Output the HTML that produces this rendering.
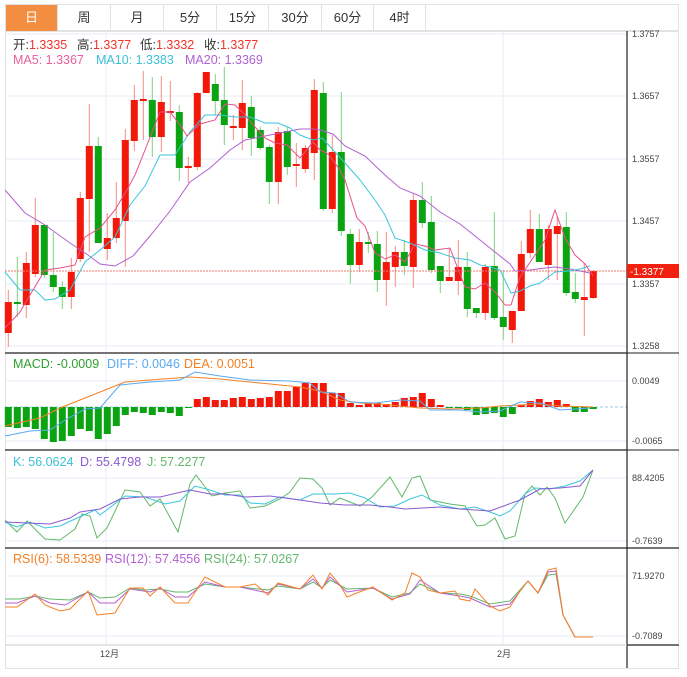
<!DOCTYPE html>
<html><head><meta charset="utf-8">
<style>
body{margin:0;background:#fff;width:687px;height:677px;overflow:hidden;font-family:"Liberation Sans","Noto Sans CJK SC",sans-serif;}
.tabs{position:absolute;left:5px;top:4px;height:27px;width:674px;border:1px solid #e2e2e2;border-bottom:1px solid #dde3ea;box-sizing:border-box;}
.tab{position:absolute;top:0;height:26px;line-height:26px;text-align:center;font-size:13px;color:#333;border-right:1px solid #e2e2e2;box-sizing:border-box;}
.tab.on{background:#f38d40;color:#fff;}
svg{position:absolute;left:0;top:0;}
</style></head><body>
<div class="tabs">
<div class="tab on" style="left:0;width:52px">日</div>
<div class="tab" style="left:52px;width:53px">周</div>
<div class="tab" style="left:105px;width:53px">月</div>
<div class="tab" style="left:158px;width:53px">5分</div>
<div class="tab" style="left:211px;width:52px">15分</div>
<div class="tab" style="left:263px;width:53px">30分</div>
<div class="tab" style="left:316px;width:52px">60分</div>
<div class="tab" style="left:368px;width:52px">4时</div>
</div>
<svg id="s" width="687" height="677" style="top:0" font-family="Liberation Sans, Noto Sans CJK SC, sans-serif">
<rect x="5.5" y="31.5" width="673" height="637" fill="none" stroke="#e2e2e2"/>
<g stroke="#e6eef4" stroke-width="1">
<line x1="5" y1="34" x2="627" y2="34"/><line x1="5" y1="96" x2="627" y2="96"/><line x1="5" y1="159" x2="627" y2="159"/><line x1="5" y1="221" x2="627" y2="221"/><line x1="5" y1="284" x2="627" y2="284"/><line x1="5" y1="346" x2="627" y2="346"/>
<line x1="5" y1="381" x2="627" y2="381"/><line x1="5" y1="441" x2="627" y2="441"/>
<line x1="5" y1="478" x2="627" y2="478"/><line x1="5" y1="541" x2="627" y2="541"/>
<line x1="5" y1="576" x2="627" y2="576"/><line x1="5" y1="636" x2="627" y2="636"/>
<line x1="106" y1="31" x2="106" y2="645"/><line x1="503" y1="31" x2="503" y2="645"/>
</g>
<line x1="5" y1="407" x2="627" y2="407" stroke="#9cc8e8" stroke-dasharray="3,2"/>
<g id="cd"></g>
<line x1="5" y1="271" x2="627" y2="271" stroke="#f07a70" stroke-dasharray="2,1"/>
<g fill="none" stroke-width="1">
<polyline stroke="#b25fd0" points="5,190 25,213 45,225 70,243 88,255 100,264 115,266 133,256 150,236 170,211 190,182 210,168 230,150 245,140 265,136 290,131 300,129 313,129 320,130 333,134 345,146 365,156 385,175 400,188 420,196 440,212 460,224 480,240 495,252 510,264 515,271 530,270 545,268 555,267 570,269 590,273"/>
<polyline stroke="#3ac6dc" points="5,272 20,290 35,290 45,300 55,299 70,290 85,262 100,250 115,237 130,205 145,186 160,155 175,155 190,132 205,115 220,115 235,117 250,117 265,123 278,123 290,128 300,135 313,140 322,138 335,152 345,163 360,180 375,200 385,215 395,238 410,243 425,250 440,253 455,258 470,260 480,265 490,267 500,270 511,293 520,291 530,286 540,283 555,272 570,271 580,269 590,266"/>
<polyline stroke="#e8508a" points="5,328 20,312 30,295 45,270 60,268 75,265 85,237 100,228 115,210 128,188 135,175 145,150 160,112 170,112 180,125 187,136 200,124 215,120 225,104 235,105 245,115 255,127 265,138 275,143 287,145 300,158 313,142 320,150 328,154 340,170 345,180 357,218 365,226 375,253 385,259 395,255 405,262 415,244 425,246 435,250 450,248 465,287 475,289 485,283 495,292 505,305 511,305 520,277 535,255 545,240 555,210 565,238 575,255 585,264 593,276"/>
<polyline stroke="#f58025" points="5,426 40,418 60,408 100,392 125,382 150,380 190,377 220,379 260,383 300,387 320,391 340,400 360,403 380,404 420,408 450,409 480,408 500,406 520,405 540,404 560,406 593,407"/>
<polyline stroke="#5aaaf0" points="5,436 30,431 50,430 65,420 85,409 100,408 120,385 150,382 180,380 195,372 220,376 250,380 290,381 310,383 320,392 335,393 350,402 375,403 400,400 420,401 430,410 460,410 480,412 500,411 520,402 540,403 560,410 590,408"/>
<polyline stroke="#62b86a" points="5,520 17,532 27,521 45,539 60,540 75,529 82,514 90,516 97,538 107,528 125,490 140,492 150,506 160,499 178,532 190,484 196,475 212,496 225,493 240,491 250,508 265,506 280,499 290,492 300,478 313,479 322,488 330,505 340,498 345,500 360,506 372,497 390,477 402,497 412,478 420,476 430,500 450,504 465,506 477,526 485,525 495,518 505,539 515,536 525,494 532,486 540,495 547,487 555,498 565,523 583,497 593,470"/>
<polyline stroke="#3ac6dc" points="5,522 17,527 30,522 45,528 60,526 75,519 95,510 100,515 125,496 145,497 165,504 180,501 195,486 210,490 225,495 240,495 250,503 265,504 280,497 300,500 313,494 335,494 350,493 365,498 380,507 395,506 410,499 422,495 440,505 460,509 475,507 490,512 500,516 510,511 525,494 535,488 550,489 565,486 580,481 593,470"/>
<polyline stroke="#8a5ad0" points="5,522 50,524 70,518 80,512 100,509 120,499 140,497 160,497 190,490 210,494 225,494 245,497 270,496 300,500 320,503 345,505 370,505 390,507 405,509 440,507 460,509 490,511 520,500 540,489 560,488 580,486 593,470"/>
<polyline stroke="#62b86a" points="5,599 20,599 35,596 50,599 70,600 88,592 100,598 115,597 130,588 145,590 160,589 175,592 188,592 205,584 225,587 240,587 268,590 278,586 300,589 313,582 322,588 330,580 347,589 373,588 392,597 410,593 420,584 440,593 460,594 470,596 490,604 510,601 528,581 538,593 548,575 556,574 563,615 575,637 593,637"/>
<polyline stroke="#b55fd0" points="5,603 17,603 35,596 50,603 65,605 88,592 100,603 115,603 130,589 150,592 160,588 175,597 188,597 205,582 225,587 240,587 268,593 278,584 300,589 313,579 322,588 330,577 347,592 373,588 392,599 410,594 420,580 440,593 460,596 470,598 490,607 510,604 528,581 538,593 548,572 556,571 563,615 575,637 593,637"/>
<polyline stroke="#f58025" points="5,607 17,607 35,594 45,605 60,611 70,609 88,591 97,615 115,613 130,588 143,588 150,596 160,587 175,603 188,603 205,577 225,587 240,587 255,584 268,595 278,583 300,589 313,575 322,589 330,573 340,585 347,597 367,589 373,587 392,600 405,593 412,573 420,577 428,590 440,593 455,591 460,599 470,601 475,589 490,606 500,611 510,607 520,591 528,581 538,593 548,570 556,568 563,615 575,637 593,637"/>
</g>
<g stroke="#222" stroke-width="1.2">
<line x1="5" y1="353" x2="627" y2="353"/><line x1="5" y1="450" x2="627" y2="450"/><line x1="5" y1="548" x2="679" y2="548"/><line x1="627" y1="645" x2="679" y2="645"/>
<line x1="627" y1="31" x2="627" y2="668"/>
</g>
<line x1="5" y1="645" x2="627" y2="645" stroke="#ccc"/>
<line x1="627" y1="353" x2="679" y2="353" stroke="#222"/><line x1="627" y1="450" x2="679" y2="450" stroke="#222"/>
<g font-size="9" fill="#444">
<text x="632" y="37">1.3757</text><text x="632" y="99">1.3657</text><text x="632" y="162">1.3557</text><text x="632" y="224">1.3457</text><text x="632" y="287">1.3357</text><text x="632" y="349">1.3258</text>
<text x="632" y="384">0.0049</text><text x="632" y="444">-0.0065</text>
<text x="632" y="481">88.4205</text><text x="632" y="544">-0.7639</text>
<text x="632" y="579">71.9270</text><text x="632" y="639">-0.7089</text>
<text x="100" y="657">12月</text><text x="497" y="657">2月</text>
</g>
<rect x="627" y="264" width="52" height="14" fill="#f2210f"/>
<text x="630" y="275" font-size="10" fill="#fff">-1.3377</text>
<g font-size="12.5">
<text y="49"><tspan x="13" fill="#333">开:</tspan><tspan fill="#f2332a">1.3335</tspan><tspan x="77" fill="#333">高:</tspan><tspan fill="#f2332a">1.3377</tspan><tspan x="140" fill="#333">低:</tspan><tspan fill="#f2332a">1.3332</tspan><tspan x="204" fill="#333">收:</tspan><tspan fill="#f2332a">1.3377</tspan></text>
<text y="64"><tspan x="13" fill="#e8609a">MA5: 1.3367</tspan><tspan x="96" fill="#3ac0d8">MA10: 1.3383</tspan><tspan x="185" fill="#b05fd0">MA20: 1.3369</tspan></text>
<text y="368"><tspan x="13" fill="#2ca02c">MACD: -0.0009</tspan><tspan x="107" fill="#5aaaf0">DIFF: 0.0046</tspan><tspan x="184" fill="#f58025">DEA: 0.0051</tspan></text>
<text y="466"><tspan x="13" fill="#3ac0d8">K: 56.0624</tspan><tspan x="80" fill="#8a5ad0">D: 55.4798</tspan><tspan x="147" fill="#62b86a">J: 57.2277</tspan></text>
<text y="563"><tspan x="13" fill="#f58025">RSI(6): 58.5339</tspan><tspan x="105" fill="#b55fd0">RSI(12): 57.4556</tspan><tspan x="204" fill="#62b86a">RSI(24): 57.0267</tspan></text>
</g>
</svg>
<script>
var C=[['r',302,333,290,347],['g',302,304,257,317],['r',263,305,252,318],['r',225,274,198,277],['g',225,275,225,278],['g',275,287,232,292],['g',287,297,281,309],['r',272,297,258,309],['r',198,259,192,262],['r',146,199,104,252],['g',146,243,137,243],['r',238,249,213,260],['r',218,238,182,243],['r',140,221,129,267],['r',100,141,85,151],['r',99,101,71,140],['g',100,137,77,157],['r',102,137,76,152],['r',111,113,81,121],['g',112,168,105,181],['r',166,168,157,183],['r',93,167,92,170],['r',72,93,72,93],['g',84,101,74,115],['g',100,125,67,145],['r',126,128,115,140],['r',103,128,80,150],['g',107,138,96,156],['g',130,148,127,150],['g',147,182,145,204],['r',132,182,127,204],['g',131,167,127,175],['r',164,166,143,187],['r',148,169,145,173],['r',90,153,79,180],['g',93,209,82,211],['r',152,209,135,213],['g',152,231,92,236],['g',234,265,229,284],['r',242,265,229,272],['g',242,244,232,253],['g',244,280,231,292],['r',262,280,232,306],['r',252,267,246,287],['g',252,266,240,275],['r',200,267,194,288],['g',200,223,182,228],['g',222,270,196,273],['g',266,281,266,293],['r',277,281,248,281],['r',267,281,240,295],['g',267,309,252,317],['g',308,313,308,318],['r',267,313,264,320],['g',266,318,212,320],['g',317,327,270,340],['r',311,330,311,343],['r',254,311,241,311],['r',229,253,210,258],['g',229,262,214,262],['r',229,265,225,280],['r',226,234,217,280],['g',227,293,212,296],['g',292,299,273,303],['r',297,300,263,336],['r',271,298,270,299]];
var M=[427,428,427,429,439,442,441,436,429,431,439,434,426,415,412,413,415,412,413,416,408,399,397,400,400,398,397,399,398,397,391,391,387,383,383,383,393,393,403,405,403,403,404,402,398,397,393,399,405,408,408,410,415,414,413,417,414,405,401,399,402,400,404,412,412,409,407];
var g=document.getElementById('cd'),h='';
for(var i=0;i<C.length;i++){var c=C[i],x=8.3+9*i,col=c[0]=='r'?'#f2180a':'#0aa312',wc=c[0]=='r'?'#f58a80':'#7fd07f';
h+='<line x1="'+x+'" y1="'+c[3]+'" x2="'+x+'" y2="'+c[4]+'" stroke="'+wc+'"/>';
h+='<rect x="'+(x-3.5)+'" y="'+c[1]+'" width="7" height="'+Math.max(1.5,c[2]-c[1])+'" fill="'+col+'"/>';
var v=M[i];if(v>407)h+='<rect x="'+(x-3.5)+'" y="407" width="7" height="'+(v-407)+'" fill="#0aa312"/>';else if(v<407)h+='<rect x="'+(x-3.5)+'" y="'+v+'" width="7" height="'+(407-v)+'" fill="#f2180a"/>';}
g.innerHTML=h;
</script>
</body></html>
